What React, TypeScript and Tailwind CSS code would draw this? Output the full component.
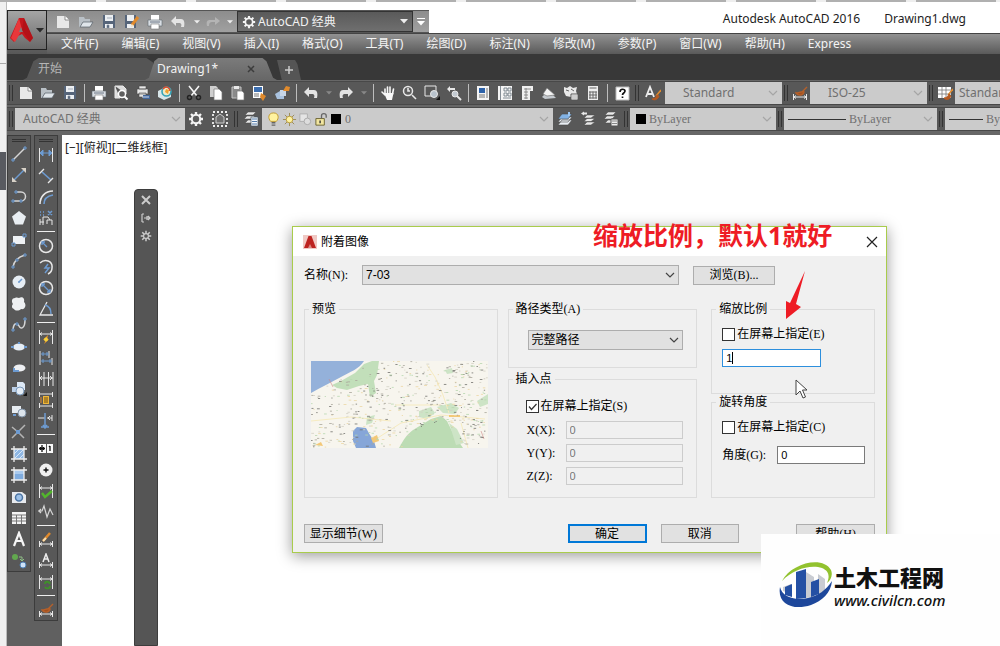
import type { ReactNode } from "react";
import { clsx } from "clsx";

const L = "#e8e8e8";
const B = "#6d9bd1";
const D = "#4a4a4a";
const O = "#e08a2c";

const page = <path d="M2 2h8l4 4v8H2z" fill={L} />;
const dimension = (
  <path d="M1.5 1v14M14.5 1v14M2 5h12M4 3.5L2 5l2 1.5M12 3.5L14 5l-2 1.5" stroke={L} fill="none" />
);
const lowDimension = (
  <path d="M1.5 9v6M14.5 9v6M2 12h12M4 10.5L2 12l2 1.5M12 10.5l2 1.5-2 1.5" stroke={L} fill="none" />
);
const brush = <path d="M15 2l-5 5M12 7c-3-1-5 1-8 1 2 3 7 3 8-1z" stroke="#b5602a" strokeWidth="1.4" fill="#a2501f" />;
const layers = (
  <path d="M5 1h8l-3 3H2zM4 5h8l-3 3H1zM5 9h8l-3 3H2z" fill={L} stroke={D} strokeWidth=".5" />
);

const icons: Record<string, ReactNode> = {
  new: (
    <>
      {page}
      <path d="M10 2v4h4" fill="#fff" stroke="#777" strokeWidth=".8" />
    </>
  ),
  open: (
    <>
      <path d="M1 3h5l1 2h5v3H5l-3 5H1z" fill="#b9c0c6" />
      <path d="M5 8h10l-3 5H2z" fill="#dfe5ea" stroke="#586069" strokeWidth=".7" />
    </>
  ),
  save: (
    <>
      <path d="M2 1h12v13H2z" fill="#56657a" />
      <path d="M4 1h8v6H4zM4 10h8v4H4z" fill="#eceff2" />
      <path d="M6 11h2v3H6zM6 4h5" fill="#46566b" stroke="#8794a3" strokeWidth=".7" />
    </>
  ),
  saveAs: (
    <>
      <path d="M1 1h11v13H1z" fill="#56657a" />
      <path d="M3 1h7v6H3zM3 10h7v4H3z" fill="#eceff2" />
      <path d="M14 3l-6 8" stroke={O} strokeWidth="3" />
      <path d="M8 10l-1 3 3-1z" fill="#f4dfba" />
    </>
  ),
  print: (
    <>
      <path d="M4 1h8v5H4z" fill="#fff" />
      <path d="M1 6h14v6H1z" fill="#d9dee4" stroke="#606870" strokeWidth=".6" />
      <path d="M4 10h8v5H4z" fill="#fff" stroke="#777" strokeWidth=".6" />
      <path d="M3 8h10" stroke="#6c7784" />
    </>
  ),
  undo: <path d="M1 7l5-5v3h5c3 0 4 3 3 8h-3c1-3 0-4-2-4H6v3z" fill="#e4e4e4" />,
  redo: <path d="M15 7l-5-5v3H5C2 5 1 8 2 13h3C4 10 5 9 7 9h3v3z" fill="#e4e4e4" />,
  redoOff: <path d="M15 7l-5-4v3H5C2 6 1 8 2 12h2c0-3 1-4 3-4h3v3z" fill="#b4b4b4" />,
  preview: (
    <>
      <path d="M2 1h8l3 3v5M2 1v12h5" fill="#dedede" stroke={L} />
      <circle cx="9" cy="9" r="3.5" fill="#5e5e5e" stroke="#fff" strokeWidth="1.4" />
      <path d="M11.5 11.5l3 3" stroke="#fff" strokeWidth="2" />
    </>
  ),
  plot: (
    <>
      <path d="M4 1h7v3H4zM2 4h11v5H2zM4 8h7v4H4z" fill={L} stroke={D} strokeWidth=".6" />
      <path d="M8 10h7v4H8z" fill="#436799" />
      <path d="M7 12h7" stroke="#cddaf0" />
    </>
  ),
  globe: (
    <>
      <path d="M1 6l6-3 7 3v6l-7 3-6-3z" fill="#d8e6e9" />
      <circle cx="9.500" cy="6.500" r="4.500" fill="#efe9c6" stroke="#36a3b7" strokeWidth="1.6" />
      <path d="M6 4c3-4 7-1 7 2" stroke="#e04b2d" strokeWidth="1.500" fill="none" />
      <path d="M9 4l3 1-1 4-3-2z" fill="#f2a22e" />
    </>
  ),
  cut: (
    <>
      <path d="M3 1l8 10M13 1L5 11" stroke="#f4f4f4" strokeWidth="1.600" />
      <circle cx="3.500" cy="12.500" r="2" fill="none" stroke="#222" strokeWidth="1.500" />
      <circle cx="12.500" cy="12.500" r="2" fill="none" stroke="#222" strokeWidth="1.500" />
    </>
  ),
  copy: (
    <>
      <path d="M2 1h6l2 2v9H2z" fill="#cfcfcf" />
      <path d="M6 4h5l3 3v8H6z" fill="#fff" stroke="#777" strokeWidth=".7" />
    </>
  ),
  paste: (
    <>
      <path d="M2 2h9v11H2z" fill="#8a8a8a" stroke="#c5c5c5" />
      <path d="M4 1h5v3H4z" fill={L} />
      <path d="M7 6h5l2 2v7H7z" fill="#fff" stroke="#777" strokeWidth=".7" />
    </>
  ),
  match: (
    <>
      <path d="M1 1h10v12H1z" fill="#fff" />
      <path d="M2 2h8v5H2z" fill="#3d6fb0" />
      <path d="M2 9h5M2 11h5" stroke="#777" />
      <path d="M9 8l5 3-3 5-3-4z" fill={O} />
    </>
  ),
  block: (
    <>
      <path d="M1 9l5-3 4 3v5H3z" fill="#a9c2df" />
      <path d="M6 5h6v6H6z" fill="#c7d5e6" />
      <path d="M9 6l3-5 4 1-1 4z" fill={O} />
    </>
  ),
  pan: (
    <>
      <path
        d="M5 9V4M7.500 9V2M10 9V2M12.500 9l1-5M5 10L2 7"
        stroke="#f7f7f7"
        strokeWidth="1.600"
        strokeLinecap="round"
        fill="none"
      />
      <path d="M4 8h9.500l-1.500 7H7z" fill="#f7f7f7" />
    </>
  ),
  zoomTime: (
    <>
      <circle cx="6" cy="6" r="4.500" fill="#5e5e5e" stroke={L} strokeWidth="1.500" />
      <path d="M6 3v3h2M10 10l4 4" stroke={L} strokeWidth="1.600" fill="none" />
    </>
  ),
  zoomWindow: (
    <>
      <path d="M1 1h11v10H1z" fill="none" stroke={L} />
      <circle cx="10" cy="9" r="3.500" fill="#b8c2cc" stroke={L} />
      <path d="M12 15h4v-4z" fill="#111" />
    </>
  ),
  zoomBack: (
    <>
      <path d="M1 4l3-3v2h5v2H4v2z" fill={L} />
      <circle cx="9" cy="9" r="3" fill="#c3cad1" stroke={L} />
      <path d="M11 11l4 4" stroke={L} strokeWidth="2" />
    </>
  ),
  properties: (
    <>
      <path d="M2 1h12v14H2z" fill="#f4f4f4" />
      <path d="M4 3h6v5H4z" fill="#2d62a9" />
      <path d="M12 3v10M4 10h6M4 12h6" stroke="#777" />
    </>
  ),
  design: (
    <>
      <path d="M1 1h14v14H1z" fill="#f4f4f4" />
      <path d="M3.500 1v14M7 3h3v3H7zM11 3h3v3h-3zM7 8h3v3H7zM11 8h3v3h-3zM6 13h8" stroke="#68737e" fill="none" strokeWidth=".8" />
    </>
  ),
  palette: (
    <>
      <path d="M3 1h11v5h-3v9H3z" fill="#f0f0f0" />
      <path d="M5 4h7M5 7h4M5 10h4M5 13h4M7 3v11" stroke="#777" strokeWidth=".8" />
    </>
  ),
  sheet: (
    <>
      <path d="M1 12l3-3 8 1 3 3-11 1z" fill="#c4c9ce" />
      <path d="M2 9l4-6 8 7-8 1z" fill="#f3f3f3" stroke="#777" strokeWidth=".7" />
    </>
  ),
  markup: (
    <>
      <path d="M1 2l3 1 3-2 3 2 4-1-1 4 1 3H8v3L3 11 1 7z" fill="#e9e9e9" />
      <path d="M3 5l3 1M8 4l3 2" stroke="#666" />
      <path d="M8 9h7v6H8z" fill="#fff" stroke="#555" />
      <path d="M9 11h5M9 13h5" stroke="#999" />
    </>
  ),
  calc: (
    <>
      <path d="M3 1h10v14H3z" fill="#eee" />
      <path d="M4.500 3h7M5 6.500v7M8 6.500v7M11 6.500v7M4 7h8M4 10h8M4 13h8" stroke="#666" />
    </>
  ),
  help: (
    <>
      <path d="M2 2h13v13H2z" fill="#fff" stroke="#bbb" />
      <path d="M6 7c0-4 5-3 5-1 0 2-2.500 2-2.500 4M8.500 11.500v1.500" fill="none" stroke="#111" strokeWidth="1.700" />
    </>
  ),
  textStyle: (
    <>
      <path d="M1 12L5 2l4 10M3 9h4" fill="none" stroke="#eee" strokeWidth="1.800" />
      <path d="M16 5l-5 6" stroke={O} strokeWidth="1.500" />
      <path d="M12 10c-1 2-2 4-5 4 3 2 6 0 7-3z" fill="#b55a22" stroke="#b55a22" />
    </>
  ),
  dimStyle: (
    <>
      {lowDimension}
      {brush}
    </>
  ),
  tableStyle: (
    <>
      <path d="M1 2h13v11H1z" fill="#fff" />
      <path d="M1 5h13M1 9h13M5 2v11M9 2v11" stroke="#777" strokeWidth=".8" />
      <path d="M16 4l-5 6" stroke={O} strokeWidth="1.500" />
      <path d="M12 9c-1 2-2 4-5 4 3 3 6 1 7-2z" fill="#b55a22" stroke="#b55a22" />
    </>
  ),
  gear: (
    <>
      <path
        d="M8 1v14M1 8h14M3 3l10 10M13 3L3 13"
        stroke="#f4f4f4"
        strokeWidth="2.400"
      />
      <circle cx="8" cy="8" r="4.200" fill="#5e5e5e" stroke="#f4f4f4" strokeWidth="2" />
    </>
  ),
  gearSmall: (
    <>
      <path d="M8 1v14M1 8h14M3 3l10 10M13 3L3 13" stroke="#ccc" strokeWidth="2" />
      <circle cx="8" cy="8" r="3.200" fill="#555" stroke="#ccc" strokeWidth="1.500" />
    </>
  ),
  workspace: (
    <>
      <path d="M1 1h14v14H1z" fill="none" stroke="#eee" strokeWidth="1.800" strokeDasharray="2 2" />
      <path d="M4 6l4-3 4 3v6H4z" fill="#6d6d6d" stroke="#ccc" />
    </>
  ),
  layerProps: (
    <>
      {layers}
      <path d="M8 6h7v9H8z" fill="#f3f7fb" stroke="#456" strokeWidth=".7" />
      <path d="M9 8h5M9 10.500h5M9 13h5" stroke="#547cab" />
    </>
  ),
  bulb: (
    <>
      <path d="M5 10C2 7 2 1 8 1s6 6 3 9z" fill="#fff3a0" stroke="#c09a2c" />
      <path d="M6 11.500h4M6 14h4" stroke="#666" strokeWidth="1.500" />
    </>
  ),
  sun: (
    <>
      <path d="M8 1v14M1 8h14M3 3l10 10M13 3L3 13" stroke="#9a8a55" />
      <circle cx="8" cy="8" r="3.500" fill="#fff3a0" stroke="#b99a3a" />
    </>
  ),
  freeze: (
    <>
      <path d="M2 2h8v8H2z" fill="#e4e4e4" stroke="#adadad" />
      <circle cx="10" cy="10" r="3.500" fill="#ddd" stroke="#aaa" />
    </>
  ),
  lock: (
    <>
      <path d="M2 7h9v7H2z" fill="#f2e6a0" stroke="#6b6230" />
      <path d="M8 7V4c0-3 5-3 5 0v2" fill="none" stroke="#666" strokeWidth="1.400" />
      <path d="M6.500 9v3" stroke="#333" strokeWidth="1.500" />
    </>
  ),
  layerCurrent: (
    <>
      <path d="M5 9h10l-4 5H1zM5 6h10l-4 5H1z" fill="#e9eef4" stroke={D} strokeWidth=".6" />
      <path d="M5 3h10l-4 5H1z" fill="#82b2e4" stroke={D} strokeWidth=".6" />
      <path d="M12 1v4" stroke="#9dc6f0" strokeWidth="2" />
    </>
  ),
  layerPrev: (
    <>
      <path d="M7 4h8l-4 3H4zM7 7.500h8l-4 3H4zM7 11h8l-4 3H4z" fill={L} stroke={D} strokeWidth=".5" />
      <path d="M1 2.500l3-2v1h3v2H4v1z" fill={L} />
    </>
  ),
  layerState: (
    <>
      {layers}
      <path d="M8 8h7v7H8z" fill="#eee" stroke="#555" />
      <path d="M9 10h5M9 12.500h5" stroke="#888" />
    </>
  ),

  line: (
    <>
      <path d="M2 14L14 2" stroke="#d5d5d5" strokeWidth="1.500" />
      <path d="M1 13h2v2H1zM13 1h2v2h-2z" fill="#5e5e5e" stroke={B} />
    </>
  ),
  xline: (
    <>
      <path d="M3 13L13 3" stroke={B} strokeWidth="1.500" />
      <path d="M10 1l5 0v5zM1 10v5h5z" fill="#d8d2c8" />
    </>
  ),
  polyline: (
    <>
      <path d="M5 3h5c6 0 6 9 0 9H2" fill="none" stroke="#d5d5d5" strokeWidth="1.500" />
      <path d="M4 2h2v2H4zM1 11h2v2H1zM9 11h2v2H9z" fill="#5e5e5e" stroke={B} />
    </>
  ),
  polygon: <path d="M8 1l7 5.500-3 8H4l-3-8z" fill="#e9eef2" />,
  rectangle: (
    <>
      <path d="M2 4h12v8H2z" fill="#eef1f4" />
      <path d="M12 2h3v3h-3zM1 11h3v3H1z" fill="#5e5e5e" stroke={B} />
    </>
  ),
  arc: (
    <>
      <path d="M2 14C3 8 7 4 14 2" fill="none" stroke="#d5d5d5" strokeWidth="1.500" />
      <path d="M1 13h2v2H1zM13 1h2v2h-2zM5 6h2v2H5z" fill="#5e5e5e" stroke={B} />
    </>
  ),
  circle: (
    <>
      <circle cx="8" cy="8" r="6.500" fill="#e7eef5" />
      <path d="M8 8l3-3M7 8h2" stroke={B} strokeWidth="1.500" />
    </>
  ),
  cloud: (
    <path d="M4 2c2-1 3 0 4 0 3-2 6 0 5 4 3 3 1 8-3 7-2 2-6 2-7 0C0 12 1 9 2 8 0 5 1 2 4 2z" fill="#eef0f2" />
  ),
  spline: (
    <>
      <path d="M2 14C2 6 6 5 8 9s6 2 6-6" fill="none" stroke="#d5d5d5" strokeWidth="1.500" />
      <path d="M1 12h2v2H1zM5 6h2v2H5zM13 1h2v2h-2z" fill="#5e5e5e" stroke={B} />
    </>
  ),
  ellipse: (
    <>
      <ellipse cx="8" cy="8" rx="6" ry="3.500" fill="#e6edf4" />
      <path d="M0 7h3v2H0zM13 7h3v2h-3zM7 3h2v2H7z" fill={B} />
    </>
  ),
  ellipseArc: (
    <>
      <ellipse cx="8.500" cy="8" rx="6" ry="3.500" fill="#eef0f3" />
      <path d="M2 8h6v4H2z" fill={B} />
      <path d="M4 8h5v2H4z" fill="#eef0f3" />
    </>
  ),
  insert: (
    <>
      <path d="M6 1h6l2 2v6H6z" fill="#dce8f5" />
      <path d="M1 6h6v5H1z" fill="#bcd0e8" />
      <circle cx="9" cy="10" r="4" fill="#e4ecf5" stroke="#7b9abc" />
      <path d="M12 15h4v-4z" fill="#111" />
    </>
  ),
  makeBlock: (
    <>
      <path d="M1 3h9v7H1z" fill="#e6ebf0" />
      <circle cx="11" cy="10" r="4" fill="#dce4ec" stroke="#8294a8" />
      <path d="M2 11h3v2H2z" fill={B} />
    </>
  ),
  point: (
    <>
      <path d="M1 3l6 5 7-7M7 8l-6 6M7 8l6 6" fill="none" stroke="#b5b5b5" strokeWidth="1.500" />
      <path d="M5 6h4v4H5z" fill={B} />
    </>
  ),
  hatch: (
    <>
      <path d="M3 3h10v10H3z" fill="#8fb7e3" />
      <path d="M3 8l5-5M3 13L13 3M8 13l5-5" stroke="#d9e8f8" />
      <path d="M3 0v16M13 0v16M0 3h16M0 13h16" stroke="#eee" strokeWidth="1.300" />
    </>
  ),
  gradient: (
    <>
      <path d="M3 3h10v10H3z" fill="#7facdf" />
      <path d="M3 3h10v4H3z" fill="#a9caee" />
      <path d="M3 0v16M13 0v16M0 3h16M0 13h16" stroke="#eee" strokeWidth="1.300" />
    </>
  ),
  region: (
    <>
      <path d="M1 3h10l4 3v8H1z" fill="#e7eaee" />
      <circle cx="8" cy="8.500" r="3.500" fill="#9dc1e8" stroke="#4d76a5" strokeWidth="1.500" />
    </>
  ),
  table: (
    <>
      <path d="M1 2h14v12H1z" fill="#f4f4f4" />
      <path d="M1 5h14M1 8h14M1 11h14M5.500 5v9M10.500 5v9" stroke="#777" />
    </>
  ),
  mtext: <path d="M3 15L8 2l5 13M5 10h6" fill="none" stroke="#f6f6f6" strokeWidth="2.200" />,
  addSelected: (
    <>
      <circle cx="4" cy="4" r="3" fill="#62a84f" />
      <circle cx="12" cy="12" r="3" fill="#cfe2f7" stroke="#4d7fb5" />
      <path d="M8 4h3v4M9 6l2 2 2-2" fill="none" stroke="#8fbf86" />
    </>
  ),

  dimLinear: (
    <>
      <path d="M1.500 1v14M14.500 1v14" stroke={L} />
      <path d="M2 6h12M5 3v6L2 6zM11 3v6l3-3z" stroke={B} fill={B} />
    </>
  ),
  dimAligned: (
    <>
      <path d="M4 4l9 8" stroke={B} strokeWidth="1.600" />
      <path d="M1 6l5-5M10 15l5-5" stroke={L} strokeWidth="1.400" />
    </>
  ),
  dimArc: (
    <>
      <path d="M2 15C2 8 7 2 15 2" fill="none" stroke={L} strokeWidth="1.600" />
      <path d="M6 15c0-5 3-8 9-9" fill="none" stroke={B} strokeWidth="1.600" />
    </>
  ),
  ordinate: (
    <>
      <path d="M2 9v6M2 12h4M5 15V7h5l2 3M9 14v-4h5v5" fill="none" stroke={L} />
      <path d="M2 2h1M5 2h1M2 5h1M5 5h1M10 5l4-4M10 1l4 4" stroke={B} strokeWidth="1.500" />
    </>
  ),
  dimRadius: (
    <>
      <circle cx="8" cy="8" r="6.500" fill="none" stroke={L} strokeWidth="1.500" />
      <path d="M9 9L4 4M4 7V4h3" fill="none" stroke={B} strokeWidth="1.300" />
    </>
  ),
  dimJogged: (
    <>
      <path d="M2 4c5-5 13-2 12 5 0 3-2 5-4 6" fill="none" stroke={L} strokeWidth="1.500" />
      <path d="M10 5L7 9h4l-4 5" fill="none" stroke={B} strokeWidth="1.500" />
    </>
  ),
  dimDiameter: (
    <>
      <circle cx="8" cy="8" r="6.500" fill="none" stroke={L} strokeWidth="1.500" />
      <path d="M4 4l8 8M4 7V4h3M12 9v3H9" fill="none" stroke={B} strokeWidth="1.300" />
    </>
  ),
  dimAngular: (
    <>
      <path d="M9 1L2 14h13" fill="none" stroke={L} strokeWidth="1.300" />
      <path d="M7 4c4 1 6 5 6 9" fill="none" stroke={B} strokeWidth="1.500" />
    </>
  ),
  quickDim: (
    <>
      {dimension}
      <path d="M10 6l-5 5h3l-2 4 5-5H9z" fill="#ff9c1e" />
      <circle cx="8" cy="10.500" r="2" fill="#f5d13b" />
    </>
  ),
  baseline: (
    <>
      <path d="M2 1v14M11 1v7M14 8v7" stroke={L} />
      <path d="M3 4h8M3 11h11M5 2v4M9 2v4M5 9v4M12 9v4" stroke={B} />
    </>
  ),
  continueDim: (
    <path d="M1.500 1v14M6 1v14M10.500 1v14M15 1v14M1 7h14M4 5L2 7l2 2M12 5l2 2-2 2" stroke={L} fill="none" />
  ),
  dimSpace: (
    <>
      <path d="M1.500 0v5M14.500 0v5M2 2h12M1.500 11v5M14.500 11v5M2 14h12" stroke={L} />
      <path d="M5 4h6v8H5z" fill="#f0b73a" />
      <path d="M6 6h4M6 8h4M6 10h4" stroke="#6b4c12" />
      <path d="M3 5v6" stroke={O} />
    </>
  ),
  dimBreak: (
    <>
      <path d="M0 5h7M9 5h5M14 2v6M12 3l-2 2 2 2" stroke={L} fill="none" />
      <path d="M7 0v14M5 12l2 3 2-3M3 14h8" stroke={B} strokeWidth="1.500" fill="none" />
    </>
  ),
  tolerance: (
    <>
      <path d="M0 3h8v9H0zM9 3h6v9H9z" fill="#fafafa" />
      <path d="M4 4v7M1 7.500h6M2.500 6v3M5.500 6v3M12 5v5M11 6l1-1" stroke="#111" strokeWidth="1.300" />
    </>
  ),
  centerMark: (
    <>
      <circle cx="8" cy="8" r="6.500" fill="#f0f0f0" />
      <path d="M8 5.500v5M5.500 8h5" stroke="#111" strokeWidth="1.400" />
    </>
  ),
  inspect: (
    <>
      {dimension}
      <path d="M4 10l3 4 7-6" fill="none" stroke="#52b52c" strokeWidth="2.400" />
    </>
  ),
  jogLine: <path d="M0 7h4l2-5 3 11 3-8 3 6M3 5L1 7l2 2" fill="none" stroke="#d5d5d5" strokeWidth="1.200" />,
  dimEdit: (
    <>
      {lowDimension}
      <path d="M5 9l7-8" stroke={O} strokeWidth="2.500" />
      <path d="M5 9l3-3" stroke="#f7e0b4" strokeWidth="2" />
    </>
  ),
  dimTextEdit: (
    <>
      {lowDimension}
      <path d="M5 9l3-8 3 8M6 6h4" fill="none" stroke="#eee" strokeWidth="1.500" />
    </>
  ),
  dimUpdate: (
    <>
      {dimension}
      <path d="M7 10c0-3 4-3 5 0M12 12c0 3-4 3-5 1" fill="none" stroke="#3f8f2a" strokeWidth="1.800" />
    </>
  ),
};

function Icon({ name, size = "size-4" }: { name: string; size?: string }) {
  return (
    <svg viewBox="0 0 16 16" className={clsx("shrink-0", size)} aria-hidden="true">
      {icons[name]}
    </svg>
  );
}

function ToolButton({ name, className = "w-[22px]" }: { name: string; className?: string }) {
  return (
    <button type="button" aria-label={name} className={clsx("flex shrink-0 items-center justify-center", className)}>
      <Icon name={name} />
    </button>
  );
}

function Caret({ className = "h-[5px] w-2" }: { className?: string }) {
  return (
    <svg viewBox="0 0 8 5" className={clsx("shrink-0", className)} aria-hidden="true">
      <path d="M0 0h8L4 4.500z" fill="currentColor" />
    </svg>
  );
}

function Chevron({ className }: { className?: string }) {
  return (
    <svg viewBox="0 0 10 6" className={clsx("pointer-events-none h-1.5 w-2.5 shrink-0", className)} aria-hidden="true">
      <path d="M1 1l4 4 4-4" fill="none" stroke="currentColor" strokeWidth="1.200" />
    </svg>
  );
}

function Grip() {
  return (
    <span className="flex w-2 shrink-0 items-center justify-center gap-0.5 bg-[#585858]">
      <i className="h-4 w-px bg-[#333]" />
      <i className="h-4 w-px bg-[#333]" />
    </span>
  );
}

function BarSelect({
  label,
  value,
  className,
  textClass,
  lead,
}: {
  label: string;
  value: string;
  className?: string;
  textClass?: string;
  lead?: ReactNode;
}) {
  return (
    <label className={clsx("relative flex items-center bg-[#cbcbcb]", className)}>
      {lead}
      <select
        aria-label={label}
        className={clsx("h-full min-w-0 flex-1 appearance-none text-xs text-[#707070]", textClass)}
      >
        <option>{value}</option>
      </select>
      <Chevron className="absolute right-1 text-[#a5a5a5]" />
    </label>
  );
}

const separator = <span className="mx-[3px] my-0.5 w-px shrink-0 bg-[#bdbdbd]" />;

const menus = [
  "文件(F)",
  "编辑(E)",
  "视图(V)",
  "插入(I)",
  "格式(O)",
  "工具(T)",
  "绘图(D)",
  "标注(N)",
  "修改(M)",
  "参数(P)",
  "窗口(W)",
  "帮助(H)",
  "Express",
];

function Header() {
  return (
    <header className="flex shrink-0 items-start bg-gradient-to-b from-[#8c8c8c] to-[#575757]">
      <button
        type="button"
        aria-label="应用程序菜单"
        className="flex h-10 w-10 shrink-0 items-center justify-center gap-0.5 border border-[#222] bg-gradient-to-b from-[#a5a5a5] to-[#6a6a6a]"
      >
        <svg viewBox="0 0 24 26" className="h-[26px] w-6" aria-hidden="true">
          <path d="M9 1h5l9 20-3 4-5-4-3-4-4 2-4 6-4-4z" fill="#c3161c" />
          <path d="M9 1l3 12-7 12-4-4z" fill="#e8383b" />
          <path d="M11 10l2 5H9z" fill="#7e7e7e" />
          <path d="M14 1l9 20-3 4-8-12z" fill="#a80f14" opacity=".6" />
        </svg>
        <Caret className="h-[5px] w-2 text-[#2a2a2a]" />
      </button>
      <div className="min-w-0 flex-1">
        <div className="flex h-[23px] bg-white">
          <div className="flex shrink-0 border-y border-[#555] bg-gradient-to-b from-[#8d8d8d] to-[#a0a0a0] pl-1">
            {["new", "open", "save", "saveAs", "print", "undo"].map((name) => (
              <ToolButton key={name} name={name} className="w-[23px]" />
            ))}
            <span className="flex w-[15px] items-center justify-center text-[#eee]"><Caret className="h-1 w-1.5" /></span>
            <ToolButton name="redoOff" className="w-[18px]" />
            <span className="flex w-[15px] items-center justify-center text-[#eee]"><Caret className="h-1 w-1.5" /></span>
            <label className="relative flex w-44 items-center border border-[#333] bg-gradient-to-b from-[#5a5a5a] to-[#6f6f6f] pl-1">
              <Icon name="gear" size="size-3.5" />
              <select
                aria-label="工作空间"
                className="h-full flex-1 appearance-none pl-0.5 text-xs leading-5 text-[#f2f2f2]"
              >
                <option>AutoCAD 经典</option>
              </select>
              <Caret className="pointer-events-none absolute right-1 h-[5px] w-2 text-[#eee]" />
            </label>
            <button type="button" aria-label="自定义" className="flex w-4 flex-col items-center justify-center gap-0.5 text-white">
              <i className="h-px w-2 bg-current" />
              <Caret />
            </button>
          </div>
          <div className="flex flex-1 items-center justify-end gap-6 pb-1.5 pr-[34px] text-xs leading-4 text-[#1d1d1d]">
            <span>Autodesk AutoCAD 2016</span>
            <span>Drawing1.dwg</span>
          </div>
        </div>
        <nav className="flex h-[21px] items-center gap-[23px] border-t border-[#444] bg-gradient-to-b from-[#929292] to-[#5a5a5a] pl-3.5 text-xs text-[#f4f4f4]">
          {menus.map((menu) => (
            <button key={menu} type="button" className="shrink-0 whitespace-nowrap">
              {menu}
            </button>
          ))}
        </nav>
      </div>
    </header>
  );
}

function FileTabs() {
  return (
    <div className="flex h-[26px] shrink-0 items-end bg-[#383838] pl-4 text-xs leading-5">
      <button
        type="button"
        className="h-[22px] w-[130px] bg-[#555] pl-[15px] text-left text-[#b5b5b5] [clip-path:polygon(0_100%,3%_90%,8%_15%,12%_0,95%_0,100%_20%,100%_100%)]"
      >
        开始
      </button>
      <div className="-ml-2 flex h-[22px] w-[132px] items-center justify-between bg-gradient-to-b from-[#7b7b7b] to-[#676767] pl-3 pr-[22px] text-[#f2f2f2] [clip-path:polygon(0_100%,3%_90%,7%_15%,10%_0,89%_0,92%_15%,97%_90%,100%_100%)]">
        <button type="button">Drawing1*</button>
        <button type="button" aria-label="关闭图形">
          <svg viewBox="0 0 8 8" className="size-2" aria-hidden="true">
            <path d="M1 1l6 6M7 1L1 7" stroke="#3c3c3c" strokeWidth="1.500" />
          </svg>
        </button>
      </div>
      <button
        type="button"
        aria-label="新图形"
        className="flex h-5 w-6 items-center justify-center bg-[#555] [clip-path:polygon(0_0,75%_0,85%_20%,100%_100%,20%_100%)]"
      >
        <svg viewBox="0 0 8 8" className="size-2" aria-hidden="true">
          <path d="M4 0v8M0 4h8" stroke="#ccc" strokeWidth="1.500" />
        </svg>
      </button>
    </div>
  );
}

function Toolbars() {
  const row = "flex h-6 border-y border-[#484848]";
  return (
    <div className="flex shrink-0 flex-col gap-0.5 overflow-hidden bg-[#676767] pb-1 pt-px">
      <div className={row}>
        <div className="flex shrink-0 bg-[#585858]">
          <Grip />
          {["new", "open", "save"].map((n) => <ToolButton key={n} name={n} />)}
          {separator}
          {["print", "preview", "plot", "globe"].map((n) => <ToolButton key={n} name={n} />)}
          {separator}
          {["cut", "copy", "paste", "match", "block"].map((n) => <ToolButton key={n} name={n} />)}
          {separator}
          <ToolButton name="undo" />
          <span className="flex w-[13px] items-center justify-center text-[#888]"><Caret className="h-1 w-1.5" /></span>
          <ToolButton name="redo" />
          <span className="flex w-[13px] items-center justify-center text-[#888]"><Caret className="h-1 w-1.5" /></span>
          {separator}
          {["pan", "zoomTime", "zoomWindow", "zoomBack"].map((n) => <ToolButton key={n} name={n} />)}
          {separator}
          {["properties", "design", "palette", "sheet", "markup", "calc"].map((n) => <ToolButton key={n} name={n} />)}
          {separator}
          <ToolButton name="help" />
          <Grip />
          <ToolButton name="textStyle" className="w-6" />
        </div>
        <BarSelect label="文字样式" value="Standard" className="w-[117px] shrink-0" textClass="pl-[18px]" />
        <Grip />
        <ToolButton name="dimStyle" className="w-5 bg-[#585858]" />
        <BarSelect label="标注样式" value="ISO-25" className="w-[117px] shrink-0" textClass="pl-[18px]" />
        <Grip />
        <ToolButton name="tableStyle" className="w-5 bg-[#585858]" />
        <BarSelect label="表格样式" value="Standard" className="w-[117px] shrink-0" textClass="pl-1" />
      </div>
      <div className={row}>
        <Grip />
        <BarSelect label="工作空间" value="AutoCAD 经典" className="w-[170px] shrink-0" textClass="pl-2" />
        <div className="flex shrink-0 bg-[#585858]">
          <ToolButton name="gear" />
          <ToolButton name="workspace" className="w-[25px]" />
          <Grip />
          <ToolButton name="layerProps" />
        </div>
        <BarSelect
          label="图层"
          value="0"
          className="w-[291px] shrink-0"
          textClass="pl-1 font-[Liberation_Serif]"
          lead={
            <span className="flex items-center gap-px pl-1">
              {["bulb", "sun", "freeze", "lock"].map((n) => <Icon key={n} name={n} size="size-[15px]" />)}
              <i className="ml-px size-2.5 bg-black" />
            </span>
          }
        />
        <div className="flex shrink-0 bg-[#585858]">
          {["layerCurrent", "layerPrev", "layerState"].map((n) => <ToolButton key={n} name={n} className="w-[23px]" />)}
          <Grip />
        </div>
        <BarSelect
          label="颜色"
          value="ByLayer"
          className="w-[146px] shrink-0"
          textClass="pl-[3px] font-[Liberation_Serif]"
          lead={<i className="ml-1.5 size-2.5 bg-black" />}
        />
        <Grip />
        <BarSelect
          label="线型"
          value="ByLayer"
          className="w-[153px] shrink-0"
          textClass="pl-[3px] font-[Liberation_Serif]"
          lead={<i className="ml-1 h-px w-[58px] bg-[#333]" />}
        />
        <Grip />
        <BarSelect
          label="线宽"
          value="ByLayer"
          className="w-[153px] shrink-0"
          textClass="pl-[3px] font-[Liberation_Serif]"
          lead={<i className="ml-1 h-px w-[34px] bg-[#333]" />}
        />
      </div>
    </div>
  );
}

const drawTools = [
  "line", "xline", "polyline", "polygon", "rectangle", "arc", "circle", "cloud", "spline", "ellipse",
  "ellipseArc", "insert", "makeBlock", "point", "hatch", "gradient", "region", "table", "mtext", "addSelected",
];

const dimTools = [
  ["dimLinear", "dimAligned", "dimArc", "ordinate"],
  ["dimRadius", "dimJogged", "dimDiameter", "dimAngular"],
  ["quickDim", "baseline", "continueDim", "dimSpace", "dimBreak"],
  ["tolerance", "centerMark", "inspect", "jogLine"],
  ["dimEdit", "dimTextEdit", "dimUpdate"],
  ["dimStyle"],
];

function DockGrip() {
  return (
    <span className="flex h-2 flex-col items-center justify-center gap-px">
      <i className="h-px w-3.5 bg-[#333]" />
      <i className="h-px w-3.5 bg-[#333]" />
    </span>
  );
}

function Docks() {
  const dock = "flex w-6 flex-col self-start border border-[#3c3c3c] bg-[#585858]";
  return (
    <aside className="flex w-[55px] shrink-0 gap-[3px] bg-[#606060]">
      <div className={dock}>
        <DockGrip />
        <div className="flex h-[427px] flex-col justify-between">
          {drawTools.map((n) => <ToolButton key={n} name={n} className="h-5" />)}
        </div>
      </div>
      <div className={dock}>
        <DockGrip />
        {dimTools.map((group, i) => (
          <div key={group[0]} className="flex flex-col">
            {i > 0 && <i className="mx-0.5 my-[3px] h-px bg-[#eee]" />}
            {group.map((n) => <ToolButton key={n} name={n} className="h-[21px]" />)}
          </div>
        ))}
      </div>
    </aside>
  );
}

// Small repeatable scatter of place names and roads for the preview map.
let seed = 7;
function next() {
  seed = (seed * 16807) % 2147483647;
  return seed / 2147483647;
}

const specks = Array.from({ length: 620 }, (_, i) => ({
  x: next() * 176,
  y: next() * 86,
  w: 1 + next() * 2,
  c: ["#73736e", "#aaa79c", "#d3d0c4", "#b8d8b0", "#ecd7a4"][i % 5],
})).filter((s) => s.x + s.y * 1.9 > 62 && !(s.x > 92 && s.x < 148 && s.y > 60 + Math.abs(s.x - 126) * 0.5));

function PreviewMap() {
  return (
    <svg viewBox="0 0 177 87" className="h-[87px] w-[177px]" role="img" aria-label="预览">
      <path d="M0 0h177v87H0z" fill="#f7f5ee" />
      <path d="M0 0h53c-5 8-14 11-23 16S10 26 0 32z" fill="#94b1da" />
      <path d="M53 3l8-3h7l-2 14-3 6 2 12-6 4-2-13-9 2-12 4-10-2-5-3 9-4 14-8z" fill="#c2dfba" />
      <path d="M88 87c4-7 7-13 14-18l18-11 10-3 6 5 6 12 10 15z" fill="#bcdcb4" />
      <path d="M108 50l12-4 4 6-8 6-8-2zM126 46l14-4 8 5-4 6-12-1zM134 9l7-2 1 5-6 1zM166 40l11-7v10l-8 3zM138 62l8 6 7 14-8 2zM56 56l8-2-3 8-6 2z" fill="#cde4c6" />
      <path d="M42 70l4-4 9 1 4 7 4 6 2 7H45l-3-7z" fill="#86a6d8" />
      <path d="M116 4l8 12 8 18 6 18M84 44h46M62 80l28-18 40-8 44 4M0 60l40-4 40 4M150 62l7 25" fill="none" stroke="#f6ebc0" />
      <path d="M138 54h11v2h-11zM60 77l6-3 2 6-6 2zM4 84l6-3 2 4z" fill="#f3c878" />
      {specks.map((s, i) => (
        <rect key={i} x={s.x} y={s.y} width={s.w} height=".8" fill={s.c} />
      ))}
      <path d="M18 18l4 8M170 70l3 8" stroke="#c88" strokeWidth=".6" />
    </svg>
  );
}

function Group({ title, className, children }: { title: string; className?: string; children: ReactNode }) {
  return (
    <fieldset className={clsx("min-w-0 border border-[#dcdcdc]", className)}>
      <legend className="ml-1 h-3.5 px-[3px] leading-3.5">{title}</legend>
      {children}
    </fieldset>
  );
}

function Check({ label, checked = false }: { label: string; checked?: boolean }) {
  return (
    <label className="flex items-center gap-0.5 leading-3.5">
      <span className="relative size-[13px]">
        <input
          type="checkbox"
          defaultChecked={checked}
          className="peer block size-[13px] appearance-none border border-[#333] bg-white"
        />
        <svg viewBox="0 0 13 13" className="pointer-events-none absolute inset-0 hidden peer-checked:block" aria-hidden="true">
          <path d="M3 6.500l2.500 3L10.500 4" fill="none" stroke="#333" strokeWidth="1.200" />
        </svg>
      </span>
      {label}
    </label>
  );
}

function DialogSelect({ id, label, value, className }: { id?: string; label?: string; value: string; className?: string }) {
  return (
    <span className={clsx("relative flex items-center", className)}>
      <select
        id={id}
        aria-label={label}
        className="h-5 w-full appearance-none border border-[#adadad] bg-[#e1e1e1] pl-[3px] font-[Liberation_Sans,Noto_Sans_CJK_SC,sans-serif] leading-4.5"
      >
        <option>{value}</option>
      </select>
      <Chevron className="absolute right-1 text-[#444]" />
    </span>
  );
}

function DialogButton({ children, className, primary }: { children: ReactNode; className?: string; primary?: boolean }) {
  return (
    <button
      type="button"
      className={clsx(
        "h-[19px] w-[79px] bg-[#e1e1e1]",
        primary ? "border-2 border-[#0078d7] leading-3.5" : "border border-[#adadad] leading-4",
        className,
      )}
    >
      {children}
    </button>
  );
}

function AttachDialog() {
  const number = "h-[18px] border px-[3px] font-[Liberation_Sans] text-[11px] leading-4";
  return (
    <section
      role="dialog"
      aria-label="附着图像"
      className="absolute left-[230px] top-[91px] w-[595px] border border-[#a9cc4c] bg-[#f0f0f0] font-[Liberation_Serif,Noto_Sans_CJK_SC,serif] text-xs text-black shadow-[0_3px_14px_rgba(0,0,0,0.4)]"
    >
      <div className="flex h-[29px] items-center bg-white pl-2.5 pr-2">
        <svg viewBox="0 0 14 14" className="size-3.5" aria-hidden="true">
          <path d="M0 0h14v14H0z" fill="#f0c9c4" />
          <path d="M5.500 1h3L13 13H1z" fill="#bd2320" />
          <path d="M7 9l2 4H5z" fill="#d98a84" />
        </svg>
        <h2 className="ml-1">附着图像</h2>
        <button type="button" aria-label="关闭" className="ml-auto">
          <svg viewBox="0 0 12 12" className="size-3" aria-hidden="true">
            <path d="M1 1l10 10M11 1L1 11" stroke="#222" strokeWidth="1.200" />
          </svg>
        </button>
      </div>
      <div className="flex flex-col px-[11px] py-[9px]">
        <div className="flex items-center">
          <label htmlFor="image-name" className="w-[58px]">
            名称(N):
          </label>
          <DialogSelect id="image-name" value="7-03" className="w-[317px]" />
          <button type="button" className="ml-[14px] h-[19px] w-[82px] border border-[#adadad] bg-[#e1e1e1] leading-4">
            浏览(B)...
          </button>
        </div>

        <div className="mt-[17px] flex h-[196px]">
          <Group title="预览" className="w-[195px]">
            <div className="px-1.5 pt-[45px]">
              <PreviewMap />
            </div>
          </Group>
          <div className="ml-2.5 flex w-[191px] flex-col gap-1">
            <Group title="路径类型(A)" className="h-[66px]">
              <DialogSelect label="路径类型" value="完整路径" className="ml-[19px] mt-3.5 w-[155px]" />
            </Group>
            <Group title="插入点" className="flex-1">
              <div className="pl-[17px] pt-[13px]">
                <Check label="在屏幕上指定(S)" checked />
                <div className="mt-2 flex flex-col gap-[5px]">
                  {["X", "Y", "Z"].map((axis) => (
                    <label key={axis} className="flex h-[18px] items-center">
                      <span className="w-10 pl-px">
                        {axis}({axis}):
                      </span>
                      <input defaultValue="0" disabled className={clsx(number, "w-[117px] border-[#ccc] text-[#777]")} />
                    </label>
                  ))}
                </div>
              </div>
            </Group>
          </div>
          <div className="ml-3.5 flex w-[165px] flex-col gap-px">
            <Group title="缩放比例" className="h-[92px]">
              <div className="pl-2.5 pt-[11px]">
                <Check label="在屏幕上指定(E)" />
                <div className="relative mt-2 w-[99px]">
                  <input
                    aria-label="缩放比例"
                    defaultValue="1"
                    className={clsx(number, "block w-full border-[#2d8fdd] bg-white")}
                  />
                  <i className="absolute left-2.5 top-[3px] h-3 w-px bg-black" />
                </div>
              </div>
            </Group>
            <Group title="旋转角度" className="flex-1">
              <div className="pl-2.5 pt-[11px]">
                <Check label="在屏幕上指定(C)" />
                <label className="mt-3 flex items-center">
                  <span className="w-[55px]">角度(G):</span>
                  <input defaultValue="0" className={clsx(number, "w-[88px] border-[#7a7a7a] bg-white")} />
                </label>
              </div>
            </Group>
          </div>
        </div>

        <div className="mt-[26px] flex">
          <DialogButton>显示细节(W)</DialogButton>
          <DialogButton primary className="ml-[185px]">
            确定
          </DialogButton>
          <DialogButton className="ml-3.5">取消</DialogButton>
          <DialogButton className="ml-[57px]">帮助(H)</DialogButton>
        </div>
      </div>
    </section>
  );
}

function Palette() {
  return (
    <div className="absolute bottom-0 left-[72px] top-[54px] flex w-6 flex-col items-center gap-0.5 rounded-t border border-[#3d3d3d] bg-[#555] pt-0.5">
      <button type="button" aria-label="关闭选项板" className="flex size-4 items-center justify-center">
        <svg viewBox="0 0 10 10" className="size-2.5" aria-hidden="true">
          <path d="M1 1l8 8M9 1L1 9" stroke="#ccc" strokeWidth="2" />
        </svg>
      </button>
      <button type="button" aria-label="自动隐藏" className="flex size-4 items-center justify-center">
        <svg viewBox="0 0 10 10" className="size-2.5" aria-hidden="true">
          <path d="M1 1v8M1 1h2M1 9h2M3 5h6M6 3v4M7 3l2 2-2 2" fill="none" stroke="#ccc" strokeWidth="1.200" />
        </svg>
      </button>
      <button type="button" aria-label="特性" className="flex size-4 items-center justify-center">
        <Icon name="gearSmall" size="size-3" />
      </button>
    </div>
  );
}

function Annotation() {
  return (
    <>
      <p className="absolute left-[531px] top-20 whitespace-nowrap text-[25px] font-bold leading-10 text-[#ee1c25]">
        缩放比例，默认1就好
      </p>
      <svg viewBox="0 0 26 52" className="absolute left-[720px] top-[134px] h-[52px] w-[26px]" aria-hidden="true">
        <path d="M23 2L14 35l5 3L4 50 4 32l4 2z" fill="#ee1c25" />
      </svg>
      <svg viewBox="0 0 13 20" className="absolute left-[733px] top-[244px] h-5 w-[13px]" aria-hidden="true">
        <path d="M1 1v15l4-4 3 7 2.500-1-3-7H12z" fill="#fff" stroke="#444" />
      </svg>
    </>
  );
}

function Watermark() {
  return (
    <div className="absolute bottom-0 right-0 flex h-28 w-[239px] gap-px bg-[#fefefe] pl-[18px] pt-7">
      <svg viewBox="0 0 54 46" className="h-[46px] w-[54px]" aria-hidden="true">
        <path d="M3 19C12 1 44-7 52 8c2 5 0 10-4 13 3-7 2-12-5-15C32 2 14 7 3 19z" fill="#92c22f" />
        <path d="M27 10l8 5v20l-8 1zM39 12l7 5v13l-7 3zM4 25l8-3v10l-8-3z" fill="#c9ccd2" />
        <path d="M17 10l10-3v29l-10 1z" fill="#2450a4" />
        <path d="M32 20l8-3v15l-8 3zM6 25l7-3v13l-7-2z" fill="#2450a4" />
        <path d="M1 25c-3 17 13 24 31 18 11-4 20-12 21-24-6 9-14 15-24 17C14 39 3 34 1 25z" fill="#1d479b" />
      </svg>
      <div className="flex flex-col text-[#111]">
        <strong className="text-[22px] font-black leading-[30px]">土木工程网</strong>
        <span className="text-[15px] font-medium italic leading-4">www.civilcn.com</span>
      </div>
    </div>
  );
}

export default function App() {
  return (
    <div className="flex h-screen flex-col overflow-hidden bg-white font-[Noto_Sans,Noto_Sans_CJK_SC,sans-serif]">
      <div className="flex h-0.5 shrink-0 gap-2.5 overflow-hidden bg-[#eee]">
        <i className="w-24 shrink-0 bg-[#b0b0b0]" />
        {Array.from({ length: 11 }, (_, i) => (
          <i key={i} className="w-20 shrink-0 bg-[#b0b0b0]" />
        ))}
      </div>
      <div className="flex min-h-0 flex-1">
        <div className="flex w-[7px] shrink-0 flex-col border-r border-[#bbb] bg-[#f0f0f0]">
          <i className="mt-[61px] h-px bg-[#aaa]" />
          <i className="mt-[88px] h-[38px] bg-[#585a60]" />
        </div>
        <div className="flex min-w-0 flex-1 flex-col pt-2">
          <Header />
          <FileTabs />
          <Toolbars />
          <main className="flex min-h-0 flex-1">
            <Docks />
            <div className="relative min-w-0 flex-1 bg-white">
              <p className="pl-[3px] pt-[5px] text-xs leading-4 text-[#222]">[−][俯视][二维线框]</p>
              <Palette />
              <AttachDialog />
              <Annotation />
              <Watermark />
            </div>
          </main>
        </div>
      </div>
    </div>
  );
}
